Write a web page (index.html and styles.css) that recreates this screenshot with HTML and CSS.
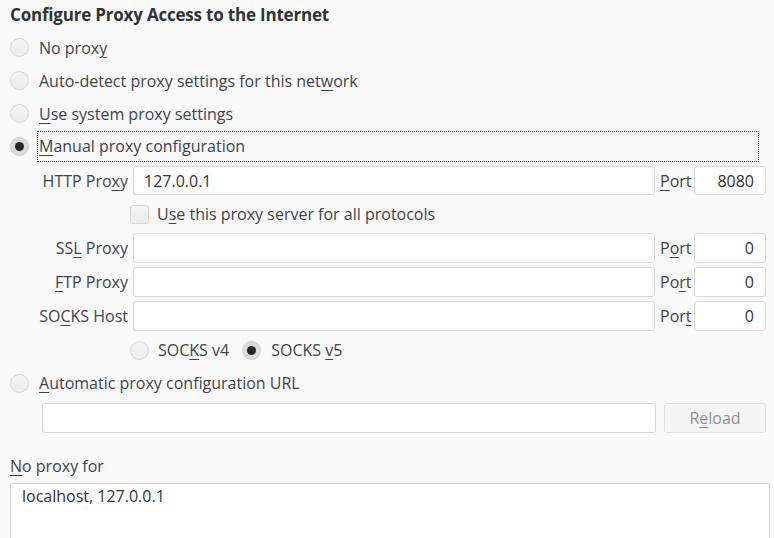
FILE: index.html
```html
<!DOCTYPE html>
<html>
<head>
<meta charset="utf-8">
<link rel="stylesheet" href="styles.css">
</head>
<body>
<div class="page">
  <h1 class="title">Configure Proxy Access to the Internet</h1>
  <div class="opt"><span class="radio"></span><span class="lbl">No prox<u>y</u></span></div>
  <div class="opt"><span class="radio"></span><span class="lbl">Auto-detect proxy settings for this net<u>w</u>ork</span></div>
  <div class="opt"><span class="radio"></span><span class="lbl"><u>U</u>se system proxy settings</span></div>
  <div class="opt"><span class="radio checked"></span><span class="lbl focus"><u>M</u>anual proxy configuration</span></div>

  <div class="grid">
    <div class="flabel"><span>HTTP Pro<u>x</u>y</span></div>
    <div class="field first">127.0.0.1</div>
    <div class="plabel"><span><u>P</u>ort</span></div>
    <div class="field port first">8080</div>

    <div class="checkrow"><span class="check"></span><span class="lbl">U<u>s</u>e this proxy server for all protocols</span></div>

    <div class="flabel"><span>SS<u>L</u> Proxy</span></div>
    <div class="field"></div>
    <div class="plabel"><span>P<u>o</u>rt</span></div>
    <div class="field port">0</div>

    <div class="flabel"><span><u>F</u>TP Proxy</span></div>
    <div class="field"></div>
    <div class="plabel"><span>Po<u>r</u>t</span></div>
    <div class="field port">0</div>

    <div class="flabel"><span>SO<u>C</u>KS Host</span></div>
    <div class="field"></div>
    <div class="plabel"><span>Por<u>t</u></span></div>
    <div class="field port">0</div>
  </div>

  <div class="socks">
    <span class="radio"></span><span class="lbl">SOC<u>K</u>S v4</span>
    <span class="radio checked v5"></span><span class="lbl">SOCKS <u>v</u>5</span>
  </div>

  <div class="opt auto"><span class="radio"></span><span class="lbl"><u>A</u>utomatic proxy configuration URL</span></div>
  <div class="urlrow">
    <div class="field url"></div>
    <div class="button"><span>R<u>e</u>load</span></div>
  </div>

  <div class="noproxy"><span><u>N</u>o proxy for</span></div>
  <div class="textarea">localhost, 127.0.0.1</div>
</div>
</body>
</html>
```

FILE: styles.css
```css
html, body {
  margin: 0;
  padding: 0;
  background: #fafafa;
  overflow: hidden;
}
body {
  font-family: "Open Sans", "Noto Sans", sans-serif;
  font-size: 16px;
  color: #3d444b;
  width: 774px;
  height: 538px;
}
u {
  text-decoration-thickness: 1px;
  text-underline-offset: 3px;
}
.page {
  display: flex;
  flex-direction: column;
}
.title {
  margin: 0;
  height: 31px;
  line-height: 30px;
  padding-left: 10px;
  font-size: 17px;
  font-weight: 700;
  color: #2e3436;
  letter-spacing: -0.2px;
}
.opt {
  display: flex;
  align-items: center;
  height: 33px;
  padding-left: 10px;
}
.radio {
  box-sizing: border-box;
  width: 19px;
  height: 19px;
  border-radius: 50%;
  border: 1px solid #d6d6d6;
  background: linear-gradient(#f4f4f4, #ececec);
  flex: none;
  display: flex;
  align-items: center;
  justify-content: center;
}
.radio.checked {
  background: #dcdcdc;
  border-color: #cfcfcf;
}
.radio.checked::after {
  content: "";
  width: 9px;
  height: 9px;
  border-radius: 50%;
  background: #222729;
}
.opt .lbl {
  margin-left: 10px;
}
.lbl.focus {
  margin-left: 8px;
  box-sizing: border-box;
  width: 722px;
  height: 31px;
  line-height: 29px;
  padding-left: 1px;
  border: 1px dotted #3a3a3a;
}
.grid {
  display: grid;
  grid-template-columns: 133px 522px 39px 72px;
  grid-template-rows: 29px 30px 30px 30px 30px;
  row-gap: 4px;
  margin-top: 3px;
}
.flabel {
  padding-right: 5px;
  display: flex;
  align-items: center;
  justify-content: flex-end;
}
.plabel {
  padding-left: 5px;
  display: flex;
  align-items: center;
}
.field {
  box-sizing: border-box;
  background: #ffffff;
  border: 1px solid #d9d9d9;
  border-radius: 3px;
  display: flex;
  align-items: center;
  padding-left: 10px;
  color: #2e3436;
}
.field.port {
  justify-content: flex-end;
  padding-right: 11px;
}
.checkrow {
  grid-column: 1 / 5;
  display: flex;
  align-items: center;
  padding-left: 130px;
}
.check {
  box-sizing: border-box;
  width: 19px;
  height: 19px;
  border: 1px solid #d6d6d6;
  border-radius: 3px;
  background: linear-gradient(#f4f4f4, #ececec);
}
.checkrow .lbl {
  margin-left: 8px;
}
.socks {
  display: flex;
  align-items: center;
  height: 30px;
  margin-top: 4px;
  padding-left: 130px;
}
.socks .lbl {
  margin-left: 9px;
}
.socks .v5 {
  margin-left: 13px;
}
.socks .v5 + .lbl {
  margin-left: 10px;
}
.opt.auto {
  height: 30px;
  margin-top: 3px;
}
.urlrow {
  display: flex;
  height: 30px;
  margin-top: 5px;
  padding-left: 42px;
}
.field.url {
  width: 614px;
}
.button {
  box-sizing: border-box;
  width: 102px;
  margin-left: 8px;
  border: 1px solid #e0e0e0;
  border-radius: 3px;
  background: #f5f5f5;
  color: #8f9394;
  display: flex;
  align-items: center;
  justify-content: center;
}
.noproxy {
  height: 26px;
  margin-top: 20px;
  padding-left: 10px;
  display: flex;
  align-items: center;
}
.textarea {
  box-sizing: border-box;
  margin: 4px 0 0 10px;
  width: 760px;
  height: 80px;
  background: #ffffff;
  border: 1px solid #d4d4d4;
  border-radius: 2px;
  padding: 0 11px;
  line-height: 24px;
  color: #2e3436;
}
```
